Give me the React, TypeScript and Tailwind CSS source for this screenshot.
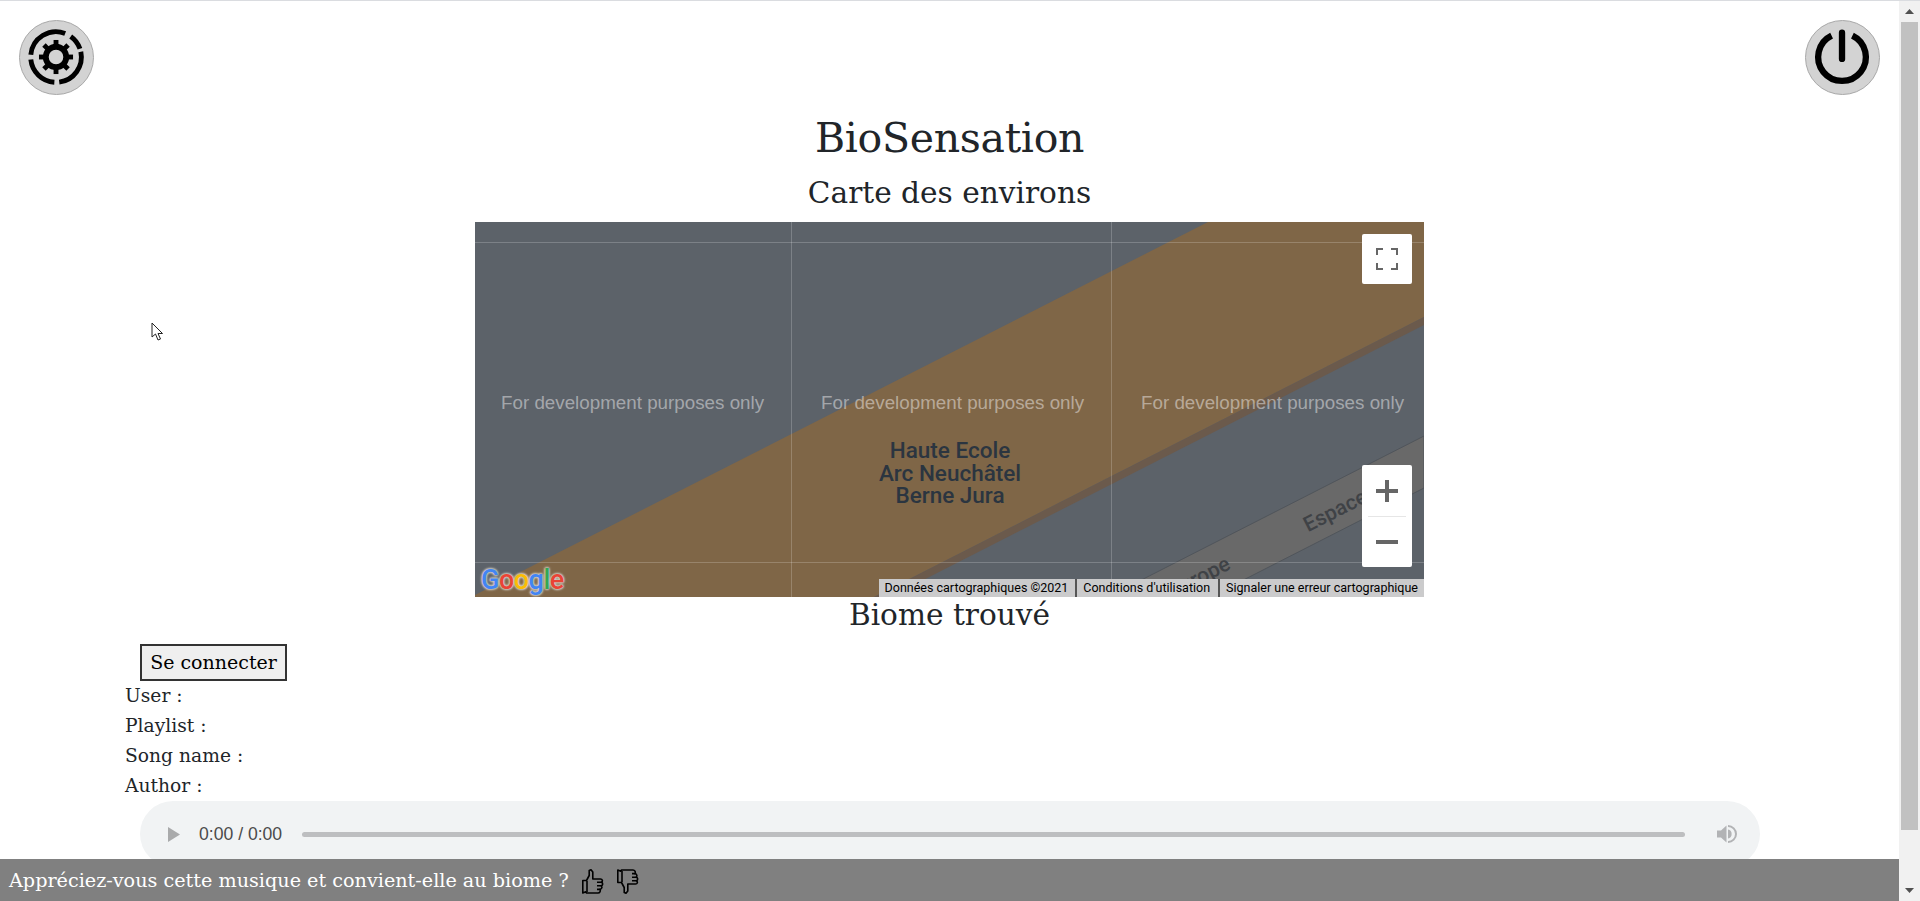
const serif = "font-['DejaVu_Serif',serif]";

function GearIcon() {
  const angles = [0, 45, 90, 135, 180, 225, 270, 315];
  return (
    <svg viewBox="0 0 75 75" className="w-full h-full">
      <g transform="translate(37 37)" fill="none" stroke="#000">
        <g strokeWidth="5">
          <path d="M-25.9 -2.3A26 26 0 0 1 9.4 -24.2" />
          <path d="M15.1 -21.1A26 26 0 0 1 24.6 -8.5" />
          <path d="M25.5 -5.3A26 26 0 0 1 3.3 25.8" />
          <path d="M-1.7 25.9A26 26 0 0 1 -25.9 2.6" />
        </g>
        <circle r="10.5" strokeWidth="6" />
        {angles.map((a) => (
          <rect key={a} x="-2.5" y="-17.5" width="5" height="6" fill="#000" stroke="none" transform={`rotate(${a})`} />
        ))}
      </g>
    </svg>
  );
}

function PowerIcon() {
  return (
    <svg viewBox="0 0 75 75" className="w-full h-full">
      <g transform="translate(37 37)" fill="none" stroke="#000" strokeWidth="6.5">
        <path d="M-10.7 -22A24.5 24.5 0 1 0 10.7 -22" />
        <path d="M0 -25V2" strokeLinecap="round" />
      </g>
    </svg>
  );
}

function ThumbIcon({ down }: { down?: boolean }) {
  return (
    <svg viewBox="0 0 22 25" className={`w-[22px] h-[25px] shrink-0 ${down ? "-scale-y-100" : ""}`} fill="none" stroke="#000" strokeWidth="1.6" strokeLinejoin="round">
      <path d="M0.8 24V11.5H4.5L7.2 6.5V1.5L9 0.8L10.8 3V10H18.5C20.5 10 21 12 19.5 13.2C21.2 14 21 16.3 19.2 16.8C20.4 18 20 20 18 20.4C18.8 22 17.8 24 16 24H4.5L3.8 22.8Z" />
      <path d="M5 12V23" />
      <path d="M15 13.2H19.5M15 16.8H19.2M15 20.4H18" />
    </svg>
  );
}

function RoundButton({ children }: { children: React.ReactNode }) {
  return (
    <div className="w-[75px] h-[75px] rounded-full bg-[#d3d3d3] border border-[#a9a9a9] overflow-hidden">{children}</div>
  );
}

function DevLabel({ className }: { className: string }) {
  return (
    <span className={`absolute top-[171px] font-['Liberation_Sans',sans-serif] text-[18.8px] leading-[20px] whitespace-nowrap text-white/45 ${className}`}>
      For development purposes only
    </span>
  );
}

function MapPanel() {
  return (
    <div className="relative w-[949px] h-[375px] mx-auto overflow-hidden bg-[#5c6269] font-['Roboto',sans-serif]">
      <svg viewBox="0 0 949 375" className="absolute inset-0 w-full h-full">
        <polygon points="0,373 733,0 949,0 949,95 399,375 0,375" fill="#7f6647" />
        <polygon points="949,95 949,103 415,375 399,375" fill="#6b5a4c" />
        <polygon points="949,214 949,266 735,375 633,375" fill="#696969" stroke="#50555b" strokeWidth="1" />
        <g stroke="#ffffff" strokeOpacity="0.2" strokeWidth="1">
          <path d="M316.5 0V375M636.5 0V375M0 20.5H949M0 340.5H949" />
        </g>
      </svg>
      <span className="absolute left-[825px] top-[267px] rotate-[-27deg] text-[21px] font-medium text-[#3f4246] whitespace-nowrap">Espace Eu</span>
      <span className="absolute left-[692px] top-[340px] rotate-[-27deg] text-[21px] font-medium text-[#3f4246] whitespace-nowrap">Europe</span>
      <DevLabel className="left-[26px]" />
      <DevLabel className="left-[346px]" />
      <DevLabel className="left-[666px]" />
      <div className="absolute left-[375px] top-[217px] w-[200px] text-center text-[22.5px] leading-[22.5px] font-medium text-[#2b3540]">
        Haute Ecole
        <br />
        Arc Neuchâtel
        <br />
        Berne Jura
      </div>
      <div className="absolute right-[12px] top-[12px] w-[50px] h-[50px] bg-white rounded-[2px] flex items-center justify-center">
        <svg viewBox="0 0 22 22" className="w-[22px] h-[22px]" fill="none" stroke="#666" strokeWidth="2">
          <path d="M1 7V1H7M15 1H21V7M21 15V21H15M7 21H1V15" />
        </svg>
      </div>
      <div className="absolute right-[12px] top-[243px] w-[50px] h-[102px] bg-white rounded-[2px] flex flex-col items-center">
        <div className="h-[51px] flex items-center justify-center">
          <svg viewBox="0 0 22 22" className="w-[22px] h-[22px]" fill="#666">
            <path d="M9 0H13V9H22V13H13V22H9V13H0V9H9Z" />
          </svg>
        </div>
        <div className="w-[38px] h-px bg-[#e6e6e6]" />
        <div className="h-[50px] flex items-center justify-center">
          <svg viewBox="0 0 22 22" className="w-[22px] h-[22px]" fill="#666">
            <path d="M0 9H22V13H0Z" />
          </svg>
        </div>
      </div>
      <div className="absolute left-[6px] bottom-[1px] text-[27px] leading-[32px] font-medium tracking-[-0.5px] [text-shadow:0_0_2px_#d0ccc2,0_0_2px_#d0ccc2,0_0_3px_#d0ccc2,0_0_3px_#d0ccc2]">
        <span className="text-[#4285f4]">G</span>
        <span className="text-[#ea4335]">o</span>
        <span className="text-[#fbbc05]">o</span>
        <span className="text-[#4285f4]">g</span>
        <span className="text-[#34a853]">l</span>
        <span className="text-[#ea4335]">e</span>
      </div>
      <div className="absolute right-0 bottom-0 h-[18px] flex items-center bg-[#cbcbcc] text-[12.5px] leading-[18px] text-black whitespace-nowrap">
        <span className="pl-[6px] pr-[7px] border-r-2 border-[#555]">Données cartographiques ©2021</span>
        <span className="pl-[6px] pr-[8px] border-r-2 border-[#555]">Conditions d'utilisation</span>
        <span className="px-[6px]">Signaler une erreur cartographique</span>
      </div>
    </div>
  );
}

function AudioPlayer() {
  return (
    <div className="ml-[15px] w-[1620px] h-[66px] rounded-[33px] bg-[#f1f3f4] flex items-center pl-[28px] pr-[23px] font-['Liberation_Sans',sans-serif]">
      <svg viewBox="0 0 12 15" className="w-[12px] h-[15px] shrink-0" fill="#a9aaab">
        <path d="M0 0L12 7.5L0 15Z" />
      </svg>
      <span className="ml-[19px] text-[17.6px] text-[#4a4a4b] whitespace-nowrap">0:00 / 0:00</span>
      <div className="ml-[20px] flex-1 h-[5px] rounded-full bg-[#bdbec0]" />
      <svg viewBox="0 0 20 20" className="ml-[32px] w-[20px] h-[20px] shrink-0" fill="#b2b3b5">
        <path d="M0 6.5H4L9.5 1.5V18.5L4 13.5H0Z" />
        <path d="M11 5.5A4.6 4.6 0 0 1 11 14.5Z" />
        <path d="M11 1V3A7 7 0 0 1 11 17V19A9 9 0 0 0 11 1Z" />
      </svg>
    </div>
  );
}

function Scrollbar() {
  return (
    <div className="w-[21px] shrink-0 bg-[#f1f1f1] flex flex-col items-center">
      <div className="h-[21px] w-full flex items-center justify-center">
        <svg viewBox="0 0 9 5" className="w-[9px] h-[5px]" fill="#505050"><path d="M4.5 0L9 5H0Z" /></svg>
      </div>
      <div className="w-[17px] h-[808px] bg-[#c1c1c1]" />
      <div className="flex-1" />
      <div className="h-[21px] w-full flex items-center justify-center">
        <svg viewBox="0 0 9 5" className="w-[9px] h-[5px]" fill="#505050"><path d="M0 0H9L4.5 5Z" /></svg>
      </div>
    </div>
  );
}

export default function App() {
  return (
    <div className={`relative w-[1920px] h-[901px] overflow-hidden bg-white border-t border-[#dadce0] flex ${serif}`}>
      <main className="relative flex-1 min-w-0 text-[#212529]">
        <div className="flex justify-between pt-[19px] pl-[19px] pr-[19px]">
          <RoundButton><GearIcon /></RoundButton>
          <RoundButton><PowerIcon /></RoundButton>
        </div>
        <h1 className="mt-[19px] text-center text-[41px] leading-[48px] tracking-[-0.3px]">BioSensation</h1>
        <h2 className="mt-[14px] mb-[12px] text-center text-[29.6px] leading-[34px]">Carte des environs</h2>
        <MapPanel />
        <h2 className="mt-[1px] text-center text-[29.6px] leading-[34px]">Biome trouvé</h2>
        <div className="mt-[12px] pl-[125px] text-[18.7px] leading-[30px] text-[#212529]">
          <button className="ml-[15px] w-[147px] h-[37px] pb-[2px] bg-[#efefef] border-2 border-[#333] text-black text-[19px] leading-[30px]">Se connecter</button>
          <div>User :</div>
          <div>Playlist :</div>
          <div>Song name :</div>
          <div>Author :</div>
        </div>
        <div className="pl-[125px]">
          <AudioPlayer />
        </div>
        <div className="absolute left-0 right-0 bottom-0 h-[42px] pt-[3px] bg-[#808080] flex items-center pl-[9px] text-white text-[19.2px]">
          <span className="whitespace-nowrap">Appréciez-vous cette musique et convient-elle au biome ?</span>
          <div className="ml-[13px]"><ThumbIcon /></div>
          <div className="ml-[13px]"><ThumbIcon down /></div>
        </div>
      </main>
      <Scrollbar />
      <svg viewBox="0 0 13 20" className="absolute left-[151px] top-[321px] w-[13px] h-[20px]" fill="#fff" stroke="#222" strokeWidth="1">
        <path d="M1 1V15L4.5 12L7 18L9.5 17L7 11.5H11.5Z" />
      </svg>
    </div>
  );
}
